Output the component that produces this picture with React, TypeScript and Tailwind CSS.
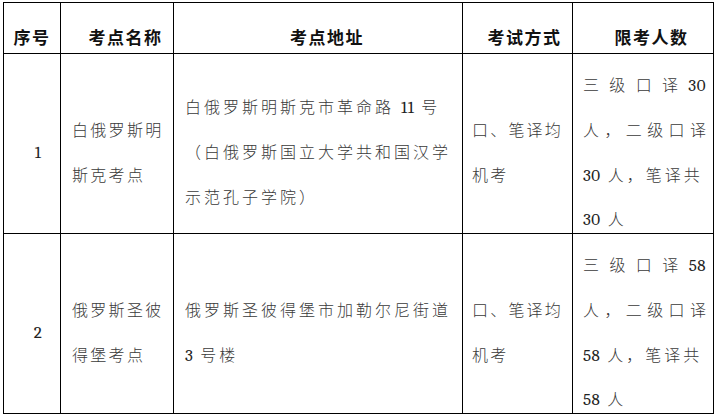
const body = "font-['Liberation_Serif','Noto_Sans_CJK_SC',serif]";
const head = "font-['Noto_Sans_CJK_SC',sans-serif]";

function Num({ children }: { children: React.ReactNode }) {
	return (
		<span className="font-serif text-[17px] font-normal tracking-[0.5px] text-[#222]">
			{children}
		</span>
	);
}

type Row = {
	no: string;
	name: string[];
	address: React.ReactNode[];
	method: string[];
	quota: string;
};

const rows: Row[] = [
	{
		no: "1",
		name: ["白俄罗斯明", "斯克考点"],
		address: [
			<>
				白俄罗斯明斯克市革命路 <Num>11</Num> 号
			</>,
			"（白俄罗斯国立大学共和国汉学",
			"示范孔子学院）",
		],
		method: ["口、笔译均", "机考"],
		quota: "30",
	},
	{
		no: "2",
		name: ["俄罗斯圣彼", "得堡考点"],
		address: [
			"俄罗斯圣彼得堡市加勒尔尼街道",
			<>
				<Num>3</Num> 号楼
			</>,
		],
		method: ["口、笔译均", "机考"],
		quota: "58",
	},
];

function Line({
	children,
	className = "",
}: {
	children: React.ReactNode;
	className?: string;
}) {
	return (
		<div className={`h-[45px] pt-[22px] leading-[20px] whitespace-nowrap ${className}`}>
			{children}
		</div>
	);
}

function Cell({
	children,
	className = "",
}: {
	children: React.ReactNode;
	className?: string;
}) {
	return (
		<div
			className={`flex flex-col justify-center border-r border-b border-black ${className}`}
		>
			{children}
		</div>
	);
}

function HeadCell({ text, className = "" }: { text: string; className?: string }) {
	return (
		<div
			className={`flex items-end justify-center border-r border-b border-black pb-[6px] text-[17px] leading-[20px] tracking-[1.5px] ${head} ${className}`}
		>
			{text}
		</div>
	);
}

export default function App() {
	return (
		<div className="h-[419px] w-[720px] bg-white pl-[3px] pt-[2px]">
			<div
				className={`grid w-[711px] grid-cols-[57px_113px_289px_110px_141px] grid-rows-[51px_180px_180px] border-l border-t border-black text-[16px] font-light text-[#3a3a3a] ${body}`}
			>
				<div className="contents font-semibold text-[#111]">
					<HeadCell text="序号" />
					<HeadCell text="考点名称" className="pl-[17px]" />
					<HeadCell text="考点地址" className="pl-[18px]" />
					<HeadCell text="考试方式" className="pl-[14px]" />
					<HeadCell text="限考人数" className="pl-[17px]" />
				</div>
				{rows.map((row) => (
					<div key={row.no} className="contents">
						<Cell className="items-center pl-[12px]">
							<Line>
								<Num>{row.no}</Num>
							</Line>
						</Cell>
						<Cell className="pl-[11px] tracking-[2.3px]">
							{row.name.map((l, i) => (
								<Line key={i}>{l}</Line>
							))}
						</Cell>
						<Cell className="pl-[11px] tracking-[3px]">
							{row.address.map((l, i) => (
								<Line key={i}>{l}</Line>
							))}
						</Cell>
						<Cell className="pl-[9px] tracking-[2.2px]">
							{row.method.map((l, i) => (
								<Line key={i}>{l}</Line>
							))}
						</Cell>
						<Cell className="pl-[10px] pr-[7px]">
							<Line className="flex justify-between">
								<span>三</span>
								<span>级</span>
								<span>口</span>
								<span>译</span>
								<Num>{row.quota}</Num>
							</Line>
							<Line className="flex justify-between">
								<span>人</span>
								<span>，</span>
								<span>二</span>
								<span>级</span>
								<span>口</span>
								<span>译</span>
							</Line>
							<Line className="tracking-[3px]">
								<Num>{row.quota}</Num> 人，笔译共
							</Line>
							<Line className="tracking-[3px]">
								<Num>{row.quota}</Num> 人
							</Line>
						</Cell>
					</div>
				))}
			</div>
		</div>
	);
}
